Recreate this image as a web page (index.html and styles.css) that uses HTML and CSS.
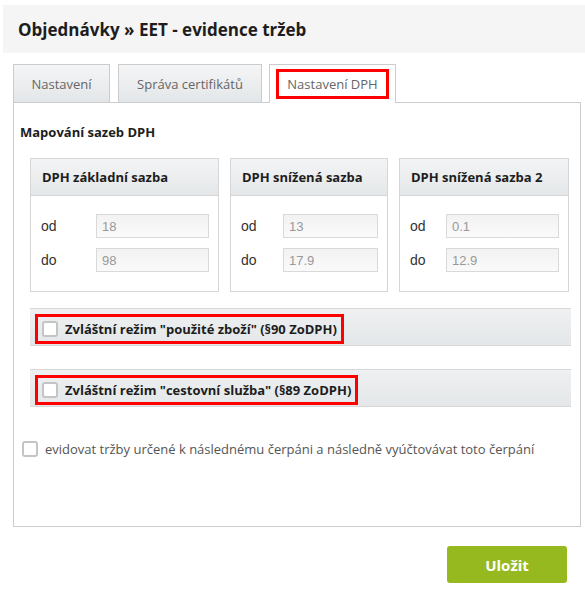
FILE: index.html
```html
<!DOCTYPE html>
<html lang="cs">
<head>
  <meta charset="UTF-8">
  <title>EET - evidence tržeb</title>
  <link rel="stylesheet" href="styles.css">
</head>
<body>
  <div class="page-header">
    <h1>Objednávky » EET - evidence tržeb</h1>
  </div>
  <div class="content">
    <!-- Záložky -->
    <div class="tabs">
      <div class="tab tab-settings">Nastavení</div>
      <div class="tab tab-certs">Správa certifikátů</div>
      <div class="tab tab-vat active"><span class="mark">Nastavení DPH</span></div>
    </div>
    <div class="panel">
      <h2>Mapování sazeb DPH</h2>
      <div class="rates">
        <div class="rate-box rate-base">
          <div class="rate-head">DPH základní sazba</div>
          <div class="rate-body">
            <label>od</label><input type="text" value="18" disabled>
            <label>do</label><input type="text" value="98" disabled>
          </div>
        </div>
        <div class="rate-box rate-low">
          <div class="rate-head">DPH snížená sazba</div>
          <div class="rate-body">
            <label>od</label><input type="text" value="13" disabled>
            <label>do</label><input type="text" value="17.9" disabled>
          </div>
        </div>
        <div class="rate-box rate-low2">
          <div class="rate-head">DPH snížená sazba 2</div>
          <div class="rate-body">
            <label>od</label><input type="text" value="0.1" disabled>
            <label>do</label><input type="text" value="12.9" disabled>
          </div>
        </div>
      </div>
      <div class="mode-bar">
        <label class="mark"><input type="checkbox"> Zvláštní režim "použité zboží" (§90 ZoDPH)</label>
      </div>
      <div class="mode-bar second">
        <label class="mark"><input type="checkbox"> Zvláštní režim "cestovní služba" (§89 ZoDPH)</label>
      </div>
      <label class="option"><input type="checkbox"> evidovat tržby určené k následnému čerpáni a následně vyúčtovávat toto čerpání</label>
    </div>
    <div class="actions">
      <button type="button">Uložit</button>
    </div>
  </div>
</body>
</html>
```

FILE: styles.css
```css
html, body {
  margin: 0;
  padding: 0;
}
body {
  background: #fff;
  font-family: "Open Sans", "Liberation Sans", sans-serif;
  color: #222;
}
/* Hlavička stránky */
.page-header {
  margin: 5px 0 0 3px;
  height: 48px;
  padding-left: 15px;
  background: #f5f5f5;
  display: flex;
  align-items: center;
}
.page-header h1 {
  margin: 0;
  font-size: 17px;
  font-weight: 700;
  color: #1d1d1d;
}
.content {
  padding: 11px 4px 0 13px;
}
/* Záložky */
.tabs {
  display: flex;
  align-items: flex-start;
}
.tab {
  box-sizing: border-box;
  height: 38px;
  display: flex;
  align-items: center;
  justify-content: center;
  border: 1px solid #ccc;
  border-bottom: none;
  background: linear-gradient(#f4f5f6, #e3e6e8);
  color: #666;
  font-size: 13px;
}
.tab-settings { width: 97px; margin-right: 8px; }
.tab-certs { width: 144px; margin-right: 7px; }
.tab-vat { width: 127px; }
.tab.active {
  height: 39px;
  margin-bottom: -1px;
  background: #fff;
  position: relative;
  z-index: 1;
  align-items: flex-start;
  padding-top: 4px;
}
.tab .mark {
  padding: 3px 8px 3px 8px;
}
.mark {
  border: 3px solid #f00;
}
/* Panel */
.panel {
  border: 1px solid #ccc;
  padding: 20px 9px 68px 6px;
}
.panel h2 {
  margin: 0 0 17px;
  font-size: 13px;
  line-height: 18px;
  font-weight: 700;
  color: #1d1d1d;
}
.rates {
  display: flex;
  gap: 11px;
  margin-left: 10px;
}
.rate-box {
  box-sizing: border-box;
  border: 1px solid #d6d6d6;
}
.rate-base { width: 189px; }
.rate-low { width: 158px; }
.rate-low2 { width: 170px; }
.rate-head {
  height: 36px;
  padding-left: 11px;
  display: flex;
  align-items: center;
  border-bottom: 1px solid #d6d6d6;
  background: linear-gradient(#f3f4f5, #e4e7e9);
  font-size: 13px;
  font-weight: 700;
  color: #1d1d1d;
}
.rate-body {
  display: grid;
  grid-template-columns: 55px 1fr;
  row-gap: 10px;
  align-items: center;
  padding: 18px 9px 19px 10px;
}
.rate-low .rate-body { grid-template-columns: 42px 1fr; }
.rate-low2 .rate-body { grid-template-columns: 36px 1fr; }
.rate-body label {
  font-family: "Liberation Sans", Arial, sans-serif;
  font-size: 14px;
  color: #333;
}
.rate-body input {
  box-sizing: border-box;
  width: 100%;
  height: 24px;
  margin: 0;
  padding: 0 5px;
  border: 1px solid #d9d9d9;
  background: linear-gradient(#f2f2f2, #fafafa);
  font-family: "Liberation Sans", Arial, sans-serif;
  font-size: 13px;
  color: #999;
}
/* Zvláštní režimy */
.mode-bar {
  box-sizing: border-box;
  height: 38px;
  margin: 16px 0 0 10px;
  padding: 5px 0 0 5px;
  border-top: 1px solid #d8d8d8;
  border-bottom: 1px solid #d8d8d8;
  background: linear-gradient(#eef0f1, #e4e7e9);
  display: flex;
  align-items: flex-start;
}
.mode-bar.second {
  margin-top: 23px;
}
.mode-bar .mark {
  display: flex;
  align-items: center;
  gap: 7px;
  height: 24px;
  padding: 0 4px 0 4px;
  font-size: 13px;
  font-weight: 700;
  color: #1d1d1d;
}
input[type="checkbox"] {
  appearance: none;
  -webkit-appearance: none;
  box-sizing: border-box;
  width: 16px;
  height: 16px;
  margin: 0;
  border: 2px solid #c4c4c4;
  border-radius: 3px;
  background: #fff;
  flex: none;
}
.option {
  display: flex;
  align-items: center;
  gap: 7px;
  margin: 33px 0 0 2px;
  font-size: 13px;
  color: #555;
}
/* Tlačítko */
.actions {
  display: flex;
  justify-content: flex-end;
  padding: 19px 14px 0 0;
}
.actions button {
  width: 120px;
  height: 37px;
  border: none;
  border-radius: 3px;
  background: #95b91e;
  color: #fff;
  font-family: "Open Sans", sans-serif;
  font-size: 15px;
  font-weight: 700;
  cursor: pointer;
}
```
